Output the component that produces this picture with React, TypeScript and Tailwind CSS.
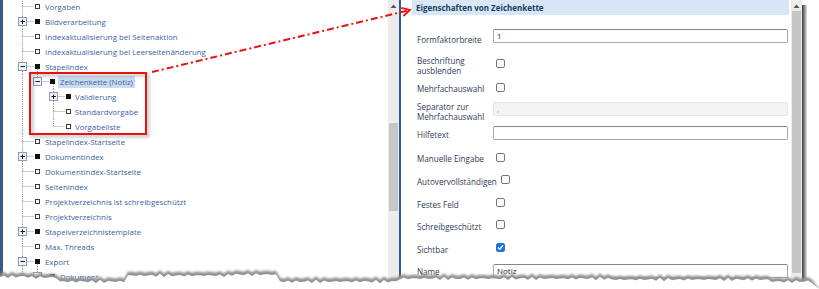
import React from 'react'

type Row = {
  label: string
  level: 1 | 2 | 3
  kind: 'leaf' | 'plus' | 'minus'
  pass?: number[]
  last?: boolean
  selected?: boolean
}

const ROWS: Row[] = [
  { label: 'Vorgaben', level: 1, kind: 'leaf' },
  { label: 'Bildverarbeitung', level: 1, kind: 'plus' },
  { label: 'Indexaktualisierung bei Seitenaktion', level: 1, kind: 'leaf' },
  { label: 'Indexaktualisierung bei Leerseitenänderung', level: 1, kind: 'leaf' },
  { label: 'Stapelindex', level: 1, kind: 'minus' },
  { label: 'Zeichenkette (Notiz)', level: 2, kind: 'minus', pass: [1], last: true, selected: true },
  { label: 'Validierung', level: 3, kind: 'plus', pass: [1] },
  { label: 'Standardvorgabe', level: 3, kind: 'leaf', pass: [1] },
  { label: 'Vorgabeliste', level: 3, kind: 'leaf', pass: [1], last: true },
  { label: 'Stapelindex-Startseite', level: 1, kind: 'leaf' },
  { label: 'Dokumentindex', level: 1, kind: 'plus' },
  { label: 'Dokumentindex-Startseite', level: 1, kind: 'leaf' },
  { label: 'Seitenindex', level: 1, kind: 'leaf' },
  { label: 'Projektverzeichnis ist schreibgeschützt', level: 1, kind: 'leaf' },
  { label: 'Projektverzeichnis', level: 1, kind: 'leaf' },
  { label: 'Stapelverzeichnistemplate', level: 1, kind: 'plus' },
  { label: 'Max. Threads', level: 1, kind: 'leaf' },
  { label: 'Export', level: 1, kind: 'minus' },
  { label: 'Dokument', level: 2, kind: 'minus', pass: [1] },
]

// connector centre, text start and square start per level (px inside the tree panel)
const CX = [19.5, 34.5, 50.5]
const TX = [42, 57, 72]
const SQ = [32, 47, 63]

const dot = { stroke: '#9a9a9a', strokeWidth: 1, strokeDasharray: '1 1' }

function Gutter({ row }: { row: Row }) {
  const i = row.level - 1
  const cx = CX[i]
  const box = row.kind !== 'leaf'
  return (
    <svg width={TX[i]} height={15} className="shrink-0">
      {(row.pass ?? []).map(l => (
        <line key={l} x1={CX[l - 1]} x2={CX[l - 1]} y1={0} y2={15} {...dot} />
      ))}
      <line x1={cx} x2={cx} y1={0} y2={box ? 3 : 7.5} {...dot} />
      {!row.last && <line x1={cx} x2={cx} y1={box ? 12 : 7.5} y2={15} {...dot} />}
      <line x1={box ? cx + 5 : cx} x2={SQ[i] - 1} y1={7.5} y2={7.5} {...dot} />
      {row.kind === 'minus' && <line x1={CX[i + 1]} x2={CX[i + 1]} y1={10} y2={15} {...dot} />}
      {box && (
        <g>
          <rect x={cx - 4} y={3.5} width={8} height={8} fill="#eef2f8" stroke="#8b9db6" />
          <line x1={cx - 2} x2={cx + 2.5} y1={7.5} y2={7.5} stroke="#1a1a1a" />
          {row.kind === 'plus' && <line x1={cx} x2={cx} y1={5.5} y2={10} stroke="#1a1a1a" />}
        </g>
      )}
      {box ? (
        <rect x={SQ[i]} y={5} width={5} height={5} fill="#111" />
      ) : (
        <rect x={SQ[i] + 0.5} y={5.5} width={4} height={4} fill="#fff" stroke="#3a3a3a" />
      )}
    </svg>
  )
}

function Tree() {
  return (
    <div className="-mt-[1px] flex flex-col">
      {ROWS.map((r, k) => (
        <div key={k} className="flex h-[15px] items-center">
          <Gutter row={r} />
          <span
            className={`whitespace-nowrap text-[7.85px] leading-[12px] text-[#41649f] ${
              r.selected ? '-ml-[2px] bg-[#c9dcf1] px-[2px] text-[#4d78b8]' : ''
            }`}
          >
            {r.label}
          </span>
        </div>
      ))}
    </div>
  )
}

function Scrollbar({ thumb }: { thumb: string }) {
  return (
    <div className="flex w-[11px] shrink-0 flex-col items-center bg-[#ececec]">
      <svg width={7} height={5} className="mt-[4px] shrink-0">
        <polygon points="3.5,0.5 6.5,4 0.5,4" fill="#555" />
      </svg>
      <div className={`w-[9px] shrink-0 bg-[#c6c6c6] ${thumb}`} />
    </div>
  )
}

function Check({ on, className = '' }: { on?: boolean; className?: string }) {
  return (
    <div
      className={`flex h-[9px] w-[9px] shrink-0 items-center justify-center rounded-[2px] border ${
        on ? 'border-[#1f76e0] bg-[#1f76e0]' : 'border-[#767676] bg-white'
      } ${className}`}
    >
      {on && (
        <svg width={7} height={7} viewBox="0 0 7 7">
          <path d="M1 3.6 L2.8 5.3 L6 1.4" fill="none" stroke="#fff" strokeWidth={1.4} />
        </svg>
      )}
    </div>
  )
}

function TextBox({ value, disabled }: { value: string; disabled?: boolean }) {
  return (
    <div
      className={`flex h-[14px] flex-1 items-center rounded-[2px] border pl-[3px] text-[8px] ${
        disabled
          ? 'border-dotted border-[#d6d6d6] bg-[#f4f4f4] text-[#9a9a9a]'
          : 'border-[#a8a8a8] border-t-[#858585] bg-white text-[#1e1e1e]'
      }`}
    >
      {value}
    </div>
  )
}

type Prop = {
  label: string
  mt: string
  labelMt: string
  ctrl: React.ReactNode
}

const PROPS: Prop[] = [
  { label: 'Formfaktorbreite', mt: 'mt-[14px]', labelMt: 'mt-[6px]', ctrl: <TextBox value="1" /> },
  { label: 'Beschriftung ausblenden', mt: 'mt-[11px]', labelMt: 'mt-0', ctrl: <Check className="ml-[3px] mt-[3px]" /> },
  { label: 'Mehrfachauswahl', mt: 'mt-[7px]', labelMt: 'mt-[1px]', ctrl: <Check className="ml-[3px]" /> },
  { label: 'Separator zur Mehrfachauswahl', mt: 'mt-[8px]', labelMt: 'mt-0', ctrl: <TextBox value="," disabled /> },
  { label: 'Hilfetext', mt: 'mt-[4px]', labelMt: 'mt-[4px]', ctrl: <TextBox value="" /> },
  { label: 'Manuelle Eingabe', mt: 'mt-[13px]', labelMt: 'mt-[1px]', ctrl: <Check className="ml-[3px]" /> },
  { label: 'Autovervollständigen', mt: 'mt-[11px]', labelMt: 'mt-[2px]', ctrl: <Check className="ml-[8px]" /> },
  { label: 'Festes Feld', mt: 'mt-[11px]', labelMt: 'mt-[2px]', ctrl: <Check className="ml-[3px]" /> },
  { label: 'Schreibgeschützt', mt: 'mt-[10px]', labelMt: 'mt-[2px]', ctrl: <Check className="ml-[3px]" /> },
  { label: 'Sichtbar', mt: 'mt-[11px]', labelMt: 'mt-[2px]', ctrl: <Check on className="ml-[3px]" /> },
  { label: 'Name', mt: 'mt-[9px]', labelMt: 'mt-[3px]', ctrl: <TextBox value="Notiz" /> },
]

function Properties() {
  return (
    <div className="flex min-w-0 flex-1 flex-col pl-[11px] pr-[1px]">
      <div className="h-[15px] shrink-0 bg-[#d8e7f5] pl-[4px] text-[8px] font-bold leading-[15px] text-[#1d3a62]">
        Eigenschaften von Zeichenkette
      </div>
      {PROPS.map(p => (
        <div key={p.label} className={`flex items-start pr-[1px] ${p.mt}`}>
          <div
            className={`w-[81px] shrink-0 whitespace-normal pl-[5px] text-[8.1px] leading-[10px] text-[#2e3d54] ${p.labelMt}`}
          >
            {p.label}
          </div>
          {p.ctrl}
        </div>
      ))}
    </div>
  )
}

// torn paper edge at the bottom of the picture
function TornEdge() {
  const base = (x: number) => {
    if (x < 30) return 273
    if (x < 60) return 274
    if (x < 125) return 278
    if (x < 230) return 272
    if (x < 278) return 271
    if (x < 400) return 278
    if (x < 610) return 275
    if (x < 770) return 276
    return 278
  }
  const top = 259
  const pts: [number, number][] = []
  for (let x = 0; x <= 812; x += 4) {
    const j = 1.1 * Math.sin(x * 0.93) + 0.7 * Math.sin(x * 2.3 + 1)
    pts.push([x, base(x) + j - top])
  }
  const line = pts.map(([x, y]) => `${x},${y.toFixed(1)}`).join(' ')
  const shifted = pts.map(([x, y]) => `${x},${(y + 3.5).toFixed(1)}`).join(' ')
  return (
    <svg width={819} height={30} className="pointer-events-none absolute bottom-0 left-0">
      <defs>
        <filter id="tornBlur" x="-5%" y="-50%" width="110%" height="200%">
          <feGaussianBlur stdDeviation="0.9" />
        </filter>
      </defs>
      <polygon points={`${line} 819,30 0,30`} fill="#929292" filter="url(#tornBlur)" />
      <polygon points={`${shifted} 819,30 0,30`} fill="#fff" />
    </svg>
  )
}

function Annotation() {
  return (
    <svg width={819} height={289} className="pointer-events-none absolute left-0 top-0">
      <defs>
        <filter id="boxShadow" x="-10%" y="-10%" width="130%" height="130%">
          <feGaussianBlur stdDeviation="1.6" />
        </filter>
      </defs>
      <rect x={32} y={75} width={116} height={61} fill="none" stroke="#000" strokeOpacity={0.22} strokeWidth={3} filter="url(#boxShadow)" />
      <rect x={30} y={73} width={116} height={61} fill="none" stroke="#e8120f" strokeWidth={2} />
      <line x1={152} y1={72} x2={408} y2={10.5} stroke="#e8120f" strokeWidth={2} strokeDasharray="7 3 2 3" />
      <polyline points="401.3,7.8 410,10 403.3,16" fill="none" stroke="#e8120f" strokeWidth={1.8} />
    </svg>
  )
}

export default function App() {
  return (
    <div className="relative h-[289px] w-[819px] overflow-hidden bg-white" style={{ fontFamily: '"Open Sans", "Noto Sans", sans-serif' }}>
      <div className="flex h-[289px]">
        <div className="flex h-full w-[802px] shrink-0 border-l-[3px] border-[#3a5a89]">
          <div className="h-full w-[385px] shrink-0 overflow-hidden bg-white">
            <Tree />
          </div>
          <Scrollbar thumb="mt-[114px] h-[88px]" />
          <div className="w-[2px] shrink-0 bg-[#2f5c9e]" />
          <Properties />
          <div className="w-[1px] shrink-0 bg-white" />
          <Scrollbar thumb="mt-[2px] h-[262px]" />
        </div>
        <div className="mt-[5px] h-full w-[5px] shrink-0 bg-gradient-to-r from-[#3c3c3c] via-[#8a8a8a] to-[#e6e6e6]" />
      </div>
      <Annotation />
      <TornEdge />
    </div>
  )
}
